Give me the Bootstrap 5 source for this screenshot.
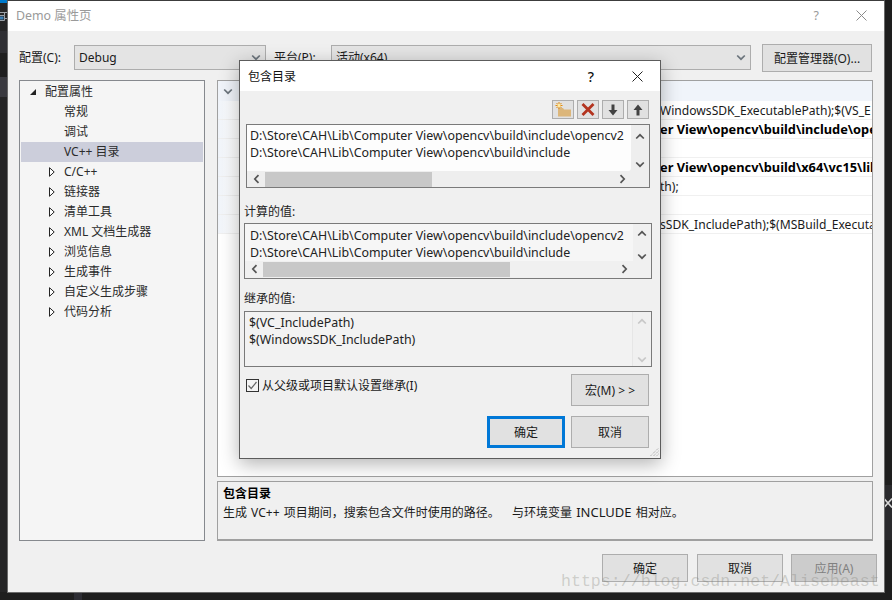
<!DOCTYPE html>
<html lang="zh"><head><meta charset="utf-8"><title>Demo 属性页</title>
<link href="https://cdn.jsdelivr.net/npm/bootstrap@5.3.0/dist/css/bootstrap.min.css" rel="stylesheet">
<style>
html,body{width:892px;height:600px;overflow:hidden}
body{background:#1e1e1e;font-family:"Noto Sans","Noto Sans CJK SC",sans-serif;font-size:12px;line-height:17px;color:#1a1a1a;position:relative}
.desk-strip{position:absolute;left:0;top:0;width:7px;height:592px;background:#252526}
.desk-blue{height:3px;background:#007acc}
.desk-ico{display:block;margin-top:8px;height:12px}
.desk-band1{height:22px;background:#2f2f33;margin-top:8px}
.desk-band2{height:24px;background:#1f1f1f}
.desk-band3{height:20px;background:#3a3a40}
.desk-right{position:absolute;left:884px;top:0;width:8px;height:592px;background:#1e1e1e}
.desk-bandr{position:absolute;left:0;top:485px;width:8px;height:55px;background:#2a2a2d}
.desk-x{position:absolute;left:0;top:498px}
.desk-foot{position:absolute;left:74px;top:592px;width:8px;height:8px;background:#2d2d33}
.win-main{position:absolute;left:7px;top:0;width:878px;height:593px;background:#f0f0f0;border:1px solid #6a6a6a;border-top-color:#3c3c3c}
.win-title{height:30px;background:#fff;color:#9a9a9a;padding:0 0 2px 8px;font-size:12.4px}
.win-ctrl{gap:37px;padding-right:17px;color:#9a9a9a}
.cfg-row{height:49px;padding:14px 11px 0 11px}
.cfg-label{width:55px;font-size:12px;height:25px}
.cfg-label.plat{width:65px}
.cfg-combo{height:25px;background:#e4e4e4;border:1px solid #adadad;padding:0 4px;position:relative}
.combo-a{width:192px}
.combo-b{width:420px}
.cfg-btn{width:110px;height:28px;margin-left:11px;margin-top:-1px}
.plain-btn{background:#e1e1e1;border:1px solid #adadad;border-radius:0;padding:0;font-size:12px;line-height:17px;color:#1a1a1a;display:flex;align-items:center;justify-content:center}
.pane-row{height:461px;padding-left:11px}
.tree-pane{width:186px;height:461px;background:#f5f5f5;border:1px solid #86898e;padding-top:1px}
.tree-row{height:20px;display:flex;align-items:center;padding-left:25px;color:#2b2b2b;padding-bottom:1px}
.tree-row.leaf{padding-left:44px}
.tree-row.on{background:#cccedb;margin:0 1px;padding-left:43px}
.tree-tog{width:8px;margin-left:-15px;margin-right:7px;display:flex}
.tree-tog.top{margin-left:-16px;margin-right:8px}
.right-col{width:656px;margin-left:12px}
.prop-pane{height:398px;background:#fff;border:1px solid #a0a0a0;overflow:hidden}
.prop-head{height:20px;background:#f0f4fa;padding-left:5px}
.prop-line{height:19px;border-bottom:1px solid #f0f0f0;line-height:19px;padding-left:442px;white-space:nowrap;overflow:hidden;background:linear-gradient(90deg,#f0f4fa 0,#fff 18px);font-size:12.1px}
.prop-line b{font-size:12.8px;font-weight:700;color:#000}
.desc-pane{height:60px;margin-top:4px;background:#f0f0f0;border:1px solid #a0a0a0;border-bottom-width:2px;padding:3px 5px 2px;line-height:18px;word-spacing:1px}
.desc-pane b{display:block;font-weight:700;color:#000}
.lat-wide{font-size:13px}
.foot-row{gap:8px;padding:13px 7px 0 0;justify-content:flex-end}
.foot-btn{width:86px;height:28px}
.foot-btn.first{margin-right:1px}
.foot-btn.off{background:#ccc;color:#808080}
.dlg{position:absolute;left:239px;top:60px;width:422px;height:399px;background:#f0f0f0;border:1px solid #5c5c5c;box-shadow:0 5px 18px rgba(0,0,0,.3)}
.dlg-title{height:30px;background:#fff;padding:0 17px 0 8px;font-size:12px;color:#111}
.dlg-ctrl{gap:38px}
.dlg-q{font-size:14px;font-weight:500}
.dlg-tools{gap:3px;padding:9px 11px 0 0;height:33px;justify-content:flex-end}
.tool-btn{width:22px;height:19px;background:#e1e1e1;border:1px solid #adadad;display:flex;align-items:center;justify-content:center}
.path-box{border:1px solid #7a7a7a;margin:0 10px 0 6px;display:grid;grid-template-columns:1fr 18px;position:relative}
.path-box.mid{margin:0 8px 0 4px}
.box-a{height:64px;grid-template-rows:46px 1fr;background:#eee}
.box-b{height:56px;grid-template-rows:37px 1fr;background:#f0f0f0;margin-top:3px!important}
.box-c{height:56px;grid-template-rows:1fr;background:#f0f0f0;margin-top:4px!important}
.path-list{padding:2px 0 0 3px;white-space:nowrap;overflow:hidden;font-size:12.4px;color:#222}
.box-a .path-list{background:#fdfdfd;border-radius:0 0 3px 0}
.box-b .path-list{background:#f6f6f6;padding:3px 0 0 5px}
.box-c .path-list{background:#f2f2f2;border-right:1px solid #e6e6e6;padding-left:4px}
.vbar{display:flex;flex-direction:column;align-items:center;justify-content:space-between;padding:8px 0 3px;color:#555}
.box-b .vbar{padding:6px 0 1px}
.box-c .vbar{color:#c8c8c8;padding:6px 0 3px}
.hbar{grid-column:1/3;display:flex;align-items:center;height:16px;padding-right:18px;color:#555}
.harrow{width:18px;flex:none;display:flex;justify-content:center}
.htrack{flex:1;height:15px;display:flex}
.hthumb{background:#c8c8c8;height:100%}
.sec-label{padding-left:4px;height:17px;color:#222}
.sec-a{margin-top:15px}
.sec-b{margin-top:11px}
.chk-row{height:41px;padding:7px 11px 0 6px}
.chk-wrap{padding-top:5px}
.chk-box{width:13px;height:13px;border:1px solid #333;background:#f4f4f4;display:flex;margin-right:3px;flex:none}
.chk-text{line-height:13px}
.macro-btn{width:78px;height:32px}
.act-row{gap:6px;padding:8px 11px 0 0;justify-content:flex-end}
.act-btn{width:78px;height:32px}
.act-btn.main{border:3px solid #0078d7}
.grip{position:absolute;right:1px;bottom:1px;display:flex}
.wmark{position:absolute;left:561px;top:572px;font-family:"Liberation Mono",monospace;font-size:16.6px;line-height:20px;color:rgba(120,120,110,.3);white-space:nowrap;pointer-events:none}
</style></head><body>
<svg width="0" height="0" class="d-none"><defs>
<symbol id="chev-u" viewBox="0 0 10 7"><path d="M1.2 5.5 5 1.8l3.800 3.700" fill="none" stroke="currentColor" stroke-width="1.700"/></symbol>
<symbol id="chev-d" viewBox="0 0 10 7"><path d="M1.2 1.500 5 5.200l3.800-3.700" fill="none" stroke="currentColor" stroke-width="1.700"/></symbol>
<symbol id="chev-l" viewBox="0 0 7 10"><path d="M5.500 1.200 1.800 5l3.700 3.800" fill="none" stroke="currentColor" stroke-width="1.700"/></symbol>
<symbol id="chev-r" viewBox="0 0 7 10"><path d="M1.500 1.200 5.200 5 1.500 8.800" fill="none" stroke="currentColor" stroke-width="1.700"/></symbol>
<symbol id="tri-r" viewBox="0 0 6 10"><path d="M.5.700 5.200 5 .5 9.300z" fill="#fff" stroke="#222"/></symbol>
</defs></svg>

<div class="desk-strip"><div class="desk-blue"></div>
 <svg class="desk-ico" width="7" height="12" viewBox="0 0 7 12"><path d="M0 1.500h7M0 4.500h4.500v5H0M4.500 4.500v-3M7 7.500H4.500" fill="none" stroke="#9aa0a6"/><path d="M0 5.500h3.500v3H0" fill="#3a7fb5"/></svg>
 <div class="desk-band1"></div><div class="desk-band2"></div><div class="desk-band3"></div></div>
<div class="desk-right"><div class="desk-bandr"></div><svg class="desk-x" width="8" height="10" viewBox="0 0 8 10"><path d="M0 .5 8 9.500M8 .5 0 9.500" stroke="#d8d8d8" stroke-width="1.500"/></svg></div>
<div class="desk-foot"></div>

<main class="win-main d-flex flex-column">
 <div class="win-title d-flex align-items-center justify-content-between">
  <span>Demo 属性页</span>
  <div class="win-ctrl d-flex align-items-center"><span>?</span>
   <svg width="11" height="11" viewBox="0 0 11 11"><path d="M.5.5l10 10M10.500.5l-10 10" stroke="#8a8a8a" fill="none"/></svg></div>
 </div>
 <div class="cfg-row d-flex">
  <div class="cfg-label d-flex align-items-center">配置(C):</div>
  <div class="cfg-combo combo-a d-flex align-items-center justify-content-between"><span>Debug</span><svg width="10" height="7" class="text-secondary"><use href="#chev-d"/></svg></div>
  <div class="cfg-label plat d-flex align-items-center ps-2">平台(P):</div>
  <div class="cfg-combo combo-b d-flex align-items-center justify-content-between"><span>活动(x64)</span><svg width="10" height="7" class="text-secondary"><use href="#chev-d"/></svg></div>
  <button class="plain-btn cfg-btn">配置管理器(O)...</button>
 </div>
 <div class="pane-row d-flex">
  <nav class="tree-pane">
   <div class="tree-row"><span class="tree-tog top"><svg width="8" height="8" viewBox="0 0 8 8"><path d="M7 1v6H1z" fill="#222"/></svg></span>配置属性</div>
   <div class="tree-row leaf">常规</div>
   <div class="tree-row leaf">调试</div>
   <div class="tree-row on">VC++ 目录</div>
   <div class="tree-row leaf"><span class="tree-tog"><svg width="6" height="10"><use href="#tri-r"/></svg></span>C/C++</div>
   <div class="tree-row leaf"><span class="tree-tog"><svg width="6" height="10"><use href="#tri-r"/></svg></span>链接器</div>
   <div class="tree-row leaf"><span class="tree-tog"><svg width="6" height="10"><use href="#tri-r"/></svg></span>清单工具</div>
   <div class="tree-row leaf"><span class="tree-tog"><svg width="6" height="10"><use href="#tri-r"/></svg></span>XML 文档生成器</div>
   <div class="tree-row leaf"><span class="tree-tog"><svg width="6" height="10"><use href="#tri-r"/></svg></span>浏览信息</div>
   <div class="tree-row leaf"><span class="tree-tog"><svg width="6" height="10"><use href="#tri-r"/></svg></span>生成事件</div>
   <div class="tree-row leaf"><span class="tree-tog"><svg width="6" height="10"><use href="#tri-r"/></svg></span>自定义生成步骤</div>
   <div class="tree-row leaf"><span class="tree-tog"><svg width="6" height="10"><use href="#tri-r"/></svg></span>代码分析</div>
  </nav>
  <div class="right-col d-flex flex-column">
   <section class="prop-pane">
    <div class="prop-head d-flex align-items-center"><svg width="10" height="7" class="text-secondary"><use href="#chev-d"/></svg></div>
    <div class="prop-line">WindowsSDK_ExecutablePath);$(VS_E</div>
    <div class="prop-line"><b>er View\opencv\build\include\ope</b></div>
    <div class="prop-line"></div>
    <div class="prop-line"><b>er View\opencv\build\x64\vc15\lib</b></div>
    <div class="prop-line">th);</div>
    <div class="prop-line"></div>
    <div class="prop-line">sSDK_IncludePath);$(MSBuild_Executa</div>
   </section>
   <section class="desc-pane"><b>包含目录</b>生成 VC++ 项目期间，搜索包含文件时使用的路径。&nbsp;&nbsp; 与环境变量 <span class="lat-wide">INCLUDE</span> 相对应。</section>
  </div>
 </div>
 <div class="foot-row d-flex">
  <button class="plain-btn foot-btn first">确定</button><button class="plain-btn foot-btn">取消</button><button class="plain-btn foot-btn off">应用(A)</button>
 </div>
</main>

<div class="dlg d-flex flex-column">
 <div class="dlg-title d-flex align-items-center justify-content-between"><span>包含目录</span>
  <div class="dlg-ctrl d-flex align-items-center"><span class="dlg-q">?</span>
  <svg width="11" height="11" viewBox="0 0 11 11"><path d="M.5.5l10 10M10.500.5l-10 10" stroke="#222" fill="none"/></svg></div></div>
 <div class="dlg-tools d-flex">
  <span class="tool-btn"><svg width="17" height="15" viewBox="0 0 17 15"><path d="M3 6h5l1 1.500h7V14.500H3z" fill="#dcb67a"/><path d="M4 0v7M.5 3.500h7M1.500 1l5 5M6.500 1l-5 5" stroke="#e08a10" stroke-width="1"/><path d="M2.500 2h3v3h-3z" fill="#ffe9a0"/></svg></span>
  <span class="tool-btn"><svg width="14" height="13" viewBox="0 0 14 13"><path d="M1.500 1l11 11M12.500 1l-11 11" stroke="#b3341f" stroke-width="2.800"/></svg></span>
  <span class="tool-btn"><svg width="10" height="12" viewBox="0 0 10 12"><path d="M3.500 .5h3v5.500H9.500L5 11.500 .5 6h3z" fill="#424242"/></svg></span>
  <span class="tool-btn"><svg width="10" height="12" viewBox="0 0 10 12"><path d="M3.500 11.500h3V6H9.500L5 .5.500 6h3z" fill="#424242"/></svg></span>
 </div>
 <div class="path-box box-a">
  <div class="path-list">D:\Store\CAH\Lib\Computer View\opencv\build\include\opencv2<br>D:\Store\CAH\Lib\Computer View\opencv\build\include</div>
  <div class="vbar"><svg width="10" height="7"><use href="#chev-u"/></svg><svg width="10" height="7"><use href="#chev-d"/></svg></div>
  <div class="hbar"><span class="harrow"><svg width="7" height="10"><use href="#chev-l"/></svg></span><div class="htrack"><div class="hthumb" style="width:167px"></div></div><span class="harrow"><svg width="7" height="10"><use href="#chev-r"/></svg></span></div>
 </div>
 <div class="sec-label sec-a">计算的值:</div>
 <div class="path-box mid box-b">
  <div class="path-list">D:\Store\CAH\Lib\Computer View\opencv\build\include\opencv2<br>D:\Store\CAH\Lib\Computer View\opencv\build\include</div>
  <div class="vbar"><svg width="10" height="7"><use href="#chev-u"/></svg><svg width="10" height="7"><use href="#chev-d"/></svg></div>
  <div class="hbar"><span class="harrow"><svg width="7" height="10"><use href="#chev-l"/></svg></span><div class="htrack"><div class="hthumb" style="width:247px"></div></div><span class="harrow"><svg width="7" height="10"><use href="#chev-r"/></svg></span></div>
 </div>
 <div class="sec-label sec-b">继承的值:</div>
 <div class="path-box mid box-c">
  <div class="path-list">$(VC_IncludePath)<br>$(WindowsSDK_IncludePath)</div>
  <div class="vbar"><svg width="10" height="7"><use href="#chev-u"/></svg><svg width="10" height="7"><use href="#chev-d"/></svg></div>
 </div>
 <div class="chk-row d-flex justify-content-between">
  <div class="chk-wrap d-flex align-items-start"><span class="chk-box"><svg width="11" height="11" viewBox="0 0 11 11"><path d="M1.500 5.500 4.200 8.500 9.500 2" fill="none" stroke="#666" stroke-width="1.200"/></svg></span><span class="chk-text">从父级或项目默认设置继承(I)</span></div>
  <button class="plain-btn macro-btn">宏(M) &gt; &gt;</button>
 </div>
 <div class="act-row d-flex"><button class="plain-btn act-btn main">确定</button><button class="plain-btn act-btn">取消</button></div>
 <svg class="grip" width="9" height="9" viewBox="0 0 9 9"><path d="M8.500 0 0 8.500M8.500 3 3 8.500M8.500 6 6 8.500" stroke="#999" stroke-dasharray="1 1"/></svg>
</div>
<div class="wmark">https://blog.csdn.net/Alisebeast</div>
</body></html>
